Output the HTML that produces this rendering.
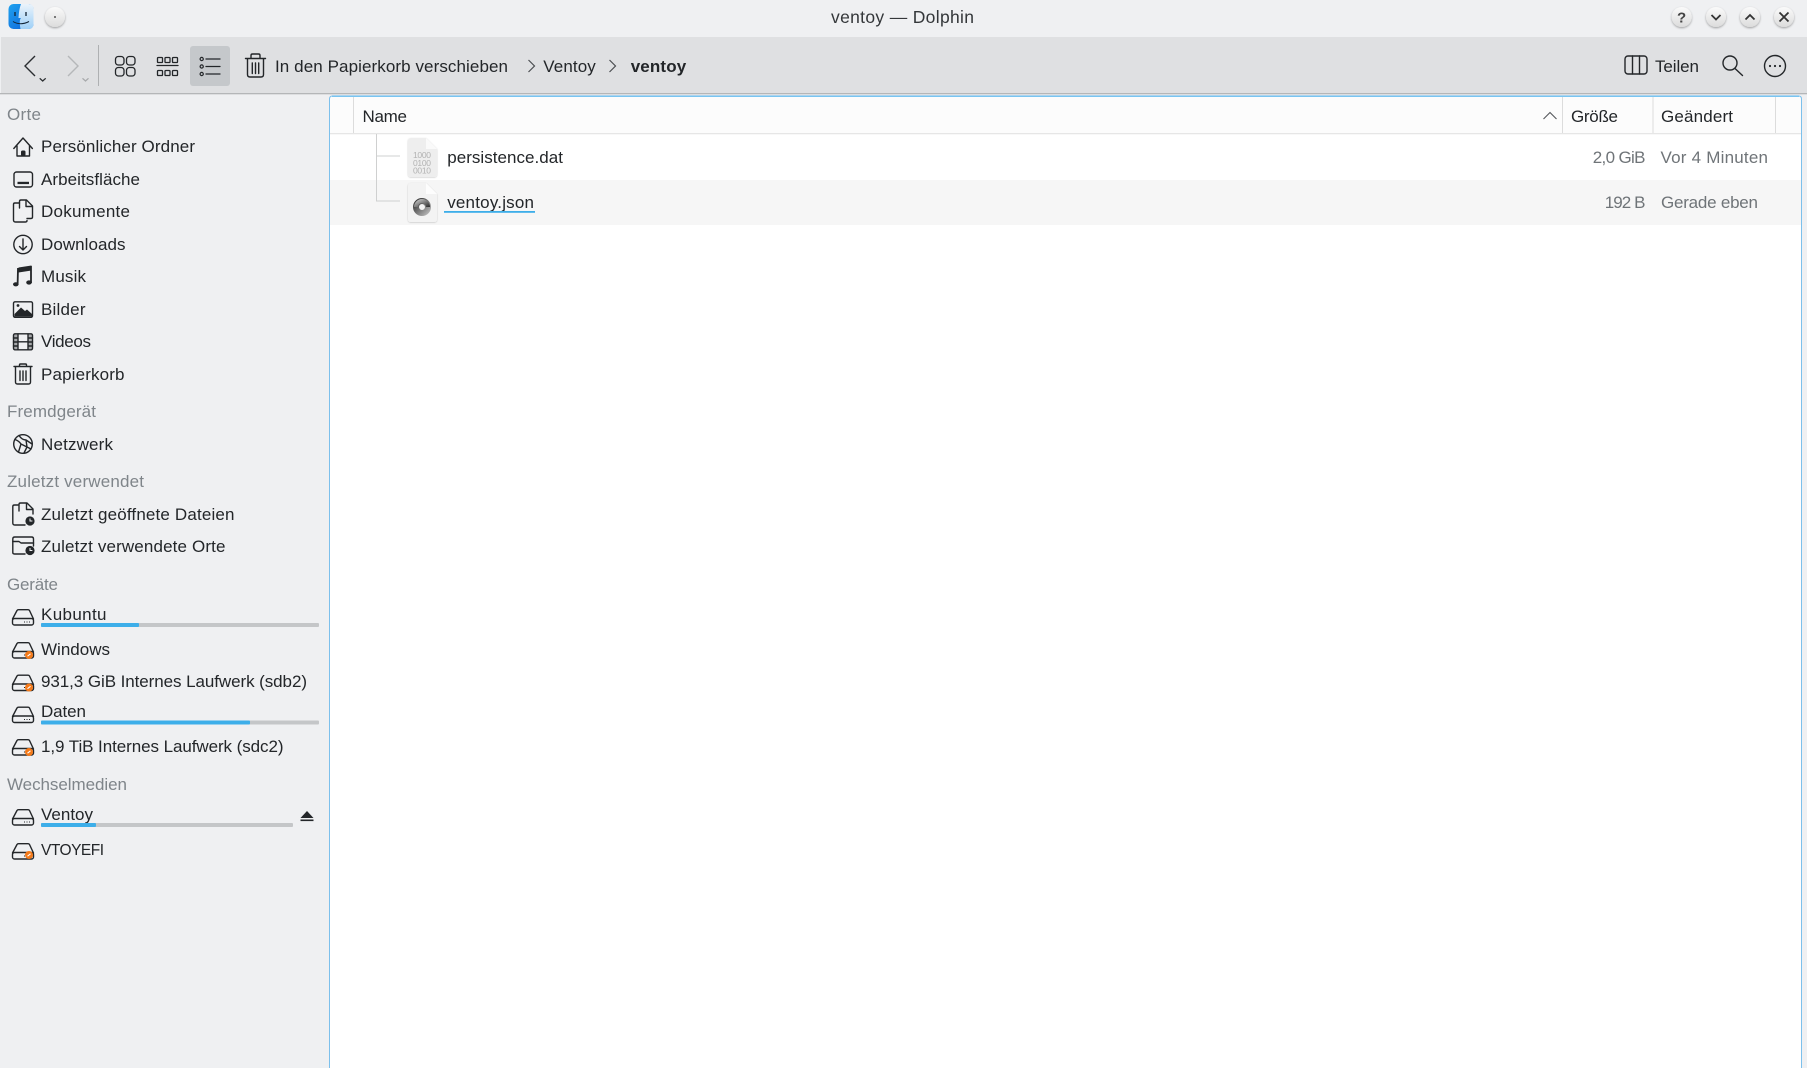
<!DOCTYPE html>
<html lang="de">
<head>
<meta charset="utf-8">
<title>ventoy — Dolphin</title>
<style>
html,body{margin:0;padding:0;background:#eff0f2;width:1807px;height:1068px;overflow:hidden}
svg{display:block}
text{font-family:"Liberation Sans",sans-serif;font-size:17px;fill:#232629}
.h{fill:#7f858a}
.d{fill:#6f7478}
.i{fill:none;stroke:#232629;stroke-width:1.4;stroke-linecap:round;stroke-linejoin:round}
.f{fill:#232629;stroke:none}
</style>
</head>
<body>
<svg width="1807" height="1068" viewBox="0 0 1807 1068" xmlns="http://www.w3.org/2000/svg">
<defs>
<linearGradient id="fb" x1="0" y1="0" x2="1" y2="1"><stop offset="0" stop-color="#1fa2ef"/><stop offset="1" stop-color="#0d5fd8"/></linearGradient>
<linearGradient id="fl" x1="0" y1="0" x2="0" y2="1"><stop offset="0" stop-color="#eaf3fb"/><stop offset="1" stop-color="#9ed0f7"/></linearGradient>
<linearGradient id="btn" x1="0" y1="0" x2="0" y2="1"><stop offset="0" stop-color="#fafafa"/><stop offset="1" stop-color="#dcdcdc"/></linearGradient>
<linearGradient id="ring" x1="0" y1="0" x2="1" y2="1"><stop offset="0" stop-color="#3a3a3a"/><stop offset="1" stop-color="#b0b0b0"/></linearGradient>
<linearGradient id="ring2" x1="1" y1="1" x2="0" y2="0"><stop offset="0" stop-color="#333"/><stop offset="1" stop-color="#bbb"/></linearGradient>
<filter id="sh" x="-30%" y="-30%" width="160%" height="170%"><feDropShadow dx="0" dy="1" stdDeviation="1" flood-color="#000" flood-opacity=".35"/></filter>
<filter id="sh2" x="-20%" y="-20%" width="140%" height="140%"><feDropShadow dx="0" dy="0.5" stdDeviation="0.7" flood-color="#000" flood-opacity=".22"/></filter>
<g id="drive">
<path class="i" d="M12.5 10 L17 1.5 Q17.5 .7 18.6 .7 H28 Q29 .7 29.5 1.5 L33.5 10"/>
<rect class="i" x="12.5" y="9.5" width="21" height="6.5" rx="2"/>
<path d="M24 13h6" stroke="#232629" stroke-width="1" stroke-dasharray="1 1.5" fill="none"/>
</g>
<g id="badge"><circle cx="29" cy="0" r="4" fill="#f47a1a"/><path d="M27.5 1.2 L30.5 -1.2" stroke="#fff" stroke-width="1"/></g>
<g id="clock"><circle cx="0" cy="0" r="4.6" fill="#232629"/><path d="M0 -2.5V0H2.4" stroke="#eff0f2" stroke-width="1" fill="none"/></g>
</defs>

<!-- backgrounds -->
<rect width="1807" height="1068" fill="#eff0f2"/>
<rect x="1" y="37" width="1806" height="56" fill="#dfe0e2"/>
<rect x="0" y="93" width="1807" height="1.3" fill="#b4b6b8"/>

<!-- title bar -->
<rect x="8.5" y="4" width="25" height="25" rx="5" fill="url(#fb)"/>
<path d="M21 4 H28.5 Q33.5 4 33.5 9 V24 Q33.5 29 28.5 29 H20.5 Q18.8 20 21 18 H18.5 Q19 9 21 4Z" fill="url(#fl)"/>
<path d="M15 12v4M26 12v4" stroke="#123" stroke-width="1.3"/>
<path d="M13 21.5 Q20.5 26 29 21.5" stroke="#123" stroke-width="1" fill="none"/>
<circle cx="55" cy="17" r="10" fill="url(#btn)" filter="url(#sh)"/>
<circle cx="55" cy="17" r="1" fill="#555"/>
<text x="831" y="23" textLength="143" lengthAdjust="spacing" style="font-size:17.5px;fill:#34373a">ventoy — Dolphin</text>
<g filter="url(#sh)">
<circle cx="1681.7" cy="17" r="10" fill="url(#btn)"/>
<circle cx="1716" cy="17" r="10" fill="url(#btn)"/>
<circle cx="1750" cy="17" r="10" fill="url(#btn)"/>
<circle cx="1784" cy="17" r="10" fill="url(#btn)"/>
</g>
<text x="1677" y="22.5" style="font-size:15px;font-weight:bold;fill:#444">?</text>
<path d="M1711.5 15 L1716 19.5 L1720.5 15" stroke="#333" stroke-width="1.8" fill="none"/>
<path d="M1745.5 19.5 L1750 15 L1754.5 19.5" stroke="#333" stroke-width="1.8" fill="none"/>
<path d="M1779.5 12.5 L1788.5 21.5 M1788.5 12.5 L1779.5 21.5" stroke="#333" stroke-width="1.8" fill="none"/>

<!-- toolbar -->
<path d="M35 56 L25 66 L35 76" fill="none" stroke="#2a2d30" stroke-width="1.4"/>
<path d="M39.7 78.3 L42.7 81 L45.7 78.3" fill="none" stroke="#2a2d30" stroke-width="1.3"/>
<path d="M68 56 L78 66 L68 76" fill="none" stroke="#b5b7b9" stroke-width="1.4"/>
<path d="M82.5 78.3 L85.5 81 L88.5 78.3" fill="none" stroke="#a8aaac" stroke-width="1.3"/>
<rect x="98" y="45" width="1" height="41" fill="#aeb0b2"/>
<g class="i" style="stroke-width:1.3">
<rect x="115.5" y="56.5" width="8.5" height="8.5" rx="2.8"/><rect x="126.5" y="56.5" width="8.5" height="8.5" rx="2.8"/>
<rect x="115.5" y="67.5" width="8.5" height="8.5" rx="2.8"/><rect x="126.5" y="67.5" width="8.5" height="8.5" rx="2.8"/>
<rect x="157.5" y="57.5" width="5" height="5" rx=".8"/><rect x="165" y="57.5" width="5" height="5" rx=".8"/><rect x="172.5" y="57.5" width="5" height="5" rx=".8"/>
<rect x="157.5" y="70.5" width="5" height="5" rx=".8"/><rect x="165" y="70.5" width="5" height="5" rx=".8"/><rect x="172.5" y="70.5" width="5" height="5" rx=".8"/>
<path d="M157 65.5H178"/>
</g>
<rect x="190" y="46" width="40" height="40" rx="3" fill="#c5c8cb"/>
<g class="i" style="stroke-width:1.2">
<circle cx="201.7" cy="59" r="1.6"/><circle cx="201.7" cy="66.5" r="1.6"/><circle cx="201.7" cy="74" r="1.6"/>
<path d="M206 59H220M206 66.5H220M206 74H220" style="stroke-width:1.3"/>
</g>
<g class="i">
<path d="M245.5 58.5H265.5"/><path d="M251 58 V55.5 Q251 54 252.5 54 H258.5 Q260 54 260 55.5 V58"/>
<path d="M247.5 59 V74.5 Q247.5 77 250 77 H261 Q263.5 77 263.5 74.5 V59"/>
<path d="M252.3 63V73.5M255.5 63V73.5M258.7 63V73.5"/>
</g>
<text x="275" y="72" textLength="233" lengthAdjust="spacing">In den Papierkorb verschieben</text>
<path d="M528.5 60 L534.5 66 L528.5 72" fill="none" stroke="#4a4d50" stroke-width="1.2"/>
<text x="543.3" y="72" textLength="52.5" lengthAdjust="spacing">Ventoy</text>
<path d="M609.5 60 L615.5 66 L609.5 72" fill="none" stroke="#4a4d50" stroke-width="1.2"/>
<text x="630.7" y="72" textLength="55.5" lengthAdjust="spacing" style="font-weight:bold">ventoy</text>
<g class="i"><rect x="1625" y="56" width="22" height="18" rx="3"/><path d="M1632.5 56V74M1639.5 56V74"/></g>
<text x="1655" y="72" textLength="44" lengthAdjust="spacing">Teilen</text>
<g class="i"><circle cx="1730" cy="63" r="7"/><path d="M1735 68.5L1742.5 75.5"/></g>
<g class="i"><circle cx="1775" cy="66" r="10.5"/></g>
<circle cx="1770" cy="66" r="1.1" fill="#232629"/><circle cx="1775" cy="66" r="1.1" fill="#232629"/><circle cx="1780" cy="66" r="1.1" fill="#232629"/>

<!-- main panel -->
<path d="M329.5 1068 V99 Q329.5 96 332.5 96 H1798.5 Q1801.5 96 1801.5 99 V1068 Z" fill="#fff"/>
<path d="M330 97 H1801 V133 H330 Z" fill="#fcfcfc"/>
<rect x="330" y="133" width="1471" height="1.3" fill="#e6e6e6"/>
<rect x="330" y="180" width="1471" height="45" fill="#f6f6f6"/>
<path d="M329.5 1068 V99 Q329.5 96 332.5 96 H1798.5 Q1801.5 96 1801.5 99 V1068" fill="none" stroke="#7cc0ec" stroke-width="1"/>
<path d="M332 96.3 H1799" stroke="#4db0ec" stroke-width="1"/>
<rect x="353" y="97" width="1" height="36" fill="#dcdcdc"/>
<rect x="1562" y="97" width="1" height="36" fill="#dcdcdc"/>
<rect x="1652.5" y="97" width="1" height="36" fill="#dcdcdc"/>
<rect x="1775" y="97" width="1" height="36" fill="#dcdcdc"/>
<text x="362.5" y="122" textLength="44.5" lengthAdjust="spacing">Name</text>
<path d="M1543.5 119 L1550 112.5 L1556.5 119" fill="none" stroke="#55585b" stroke-width="1.1"/>
<text x="1571" y="122" textLength="47" lengthAdjust="spacing">Größe</text>
<text x="1661" y="122" textLength="72" lengthAdjust="spacing">Geändert</text>

<path d="M376.5 134V201M376 156H400M376 201H400" fill="none" stroke="#cfd0d0" stroke-width="1"/>

<g filter="url(#sh2)">
<path d="M408 141 Q408 138 411 138 H426 L437 149 V174 Q437 177 434 177 H411 Q408 177 408 174Z" fill="#eeeeee"/>
<path d="M426 138 V149 H437Z" fill="#fafafa"/>
</g>
<text x="413" y="158" textLength="18" lengthAdjust="spacing" style="font-size:8.5px;fill:#b2b2b2">1000</text>
<text x="413" y="166" textLength="18" lengthAdjust="spacing" style="font-size:8.5px;fill:#b2b2b2">0100</text>
<text x="413" y="173.5" textLength="18" lengthAdjust="spacing" style="font-size:8.5px;fill:#b2b2b2">0010</text>
<g filter="url(#sh2)">
<path d="M408 186 Q408 183 411 183 H426 L437 194 V219 Q437 222 434 222 H411 Q408 222 408 219Z" fill="#f3f3f3"/>
<path d="M426 183 V194 H437Z" fill="#fdfdfd"/>
</g>
<circle cx="422" cy="207" r="6" fill="none" stroke="url(#ring)" stroke-width="6"/>
<path d="M416 207 A6 6 0 0 1 428 207" fill="none" stroke="url(#ring2)" stroke-width="4"/>

<text x="447.2" y="163" textLength="115.8" lengthAdjust="spacing">persistence.dat</text>
<text x="447.2" y="208" textLength="86.8" lengthAdjust="spacing">ventoy.json</text>
<rect x="444" y="211" width="91" height="1.8" fill="#3daee9"/>
<text x="1592.7" y="163" textLength="52.8" lengthAdjust="spacing" class="d">2,0 GiB</text>
<text x="1660.5" y="163" textLength="107.5" lengthAdjust="spacing" class="d">Vor 4 Minuten</text>
<text x="1604.7" y="208" textLength="40.8" lengthAdjust="spacing" class="d">192 B</text>
<text x="1661" y="208" textLength="97" lengthAdjust="spacing" class="d">Gerade eben</text>

<!-- sidebar text -->
<text x="7" y="120" textLength="34" lengthAdjust="spacing" class="h">Orte</text>
<text x="41" y="152" textLength="154" lengthAdjust="spacing">Persönlicher Ordner</text>
<text x="41" y="185" textLength="99" lengthAdjust="spacing">Arbeitsfläche</text>
<text x="41" y="217" textLength="89" lengthAdjust="spacing">Dokumente</text>
<text x="41" y="250" textLength="84.5" lengthAdjust="spacing">Downloads</text>
<text x="41" y="282" textLength="45" lengthAdjust="spacing">Musik</text>
<text x="41" y="315" textLength="44.5" lengthAdjust="spacing">Bilder</text>
<text x="41" y="347" textLength="50" lengthAdjust="spacing">Videos</text>
<text x="41" y="380" textLength="83.5" lengthAdjust="spacing">Papierkorb</text>
<text x="7" y="417" textLength="89" lengthAdjust="spacing" class="h">Fremdgerät</text>
<text x="41" y="450" textLength="72" lengthAdjust="spacing">Netzwerk</text>
<text x="7" y="487" textLength="137" lengthAdjust="spacing" class="h">Zuletzt verwendet</text>
<text x="41" y="520" textLength="193.5" lengthAdjust="spacing">Zuletzt geöffnete Dateien</text>
<text x="41" y="552" textLength="184.5" lengthAdjust="spacing">Zuletzt verwendete Orte</text>
<text x="7" y="590" textLength="51" lengthAdjust="spacing" class="h">Geräte</text>
<text x="41" y="620" textLength="65.5" lengthAdjust="spacing">Kubuntu</text>
<text x="41" y="655" textLength="69" lengthAdjust="spacing">Windows</text>
<text x="41" y="687" textLength="266" lengthAdjust="spacing">931,3 GiB Internes Laufwerk (sdb2)</text>
<text x="41" y="717" textLength="45" lengthAdjust="spacing">Daten</text>
<text x="41" y="752" textLength="242.5" lengthAdjust="spacing">1,9 TiB Internes Laufwerk (sdc2)</text>
<text x="7" y="790" textLength="120" lengthAdjust="spacing" class="h">Wechselmedien</text>
<text x="41" y="820" textLength="52" lengthAdjust="spacing">Ventoy</text>
<text x="41" y="855" textLength="63" lengthAdjust="spacing" style="font-size:15.5px">VTOYEFI</text>

<!-- capacity bars -->
<rect x="41" y="623" width="278" height="4" rx="1" fill="#c4c6c8"/><rect x="41" y="623" width="98" height="4" rx="1" fill="#3daee9"/>
<rect x="41" y="720.5" width="278" height="4" rx="1" fill="#c4c6c8"/><rect x="41" y="720.5" width="209" height="4" rx="1" fill="#3daee9"/>
<rect x="41" y="823" width="252" height="4" rx="1" fill="#c4c6c8"/><rect x="41" y="823" width="55" height="4" rx="1" fill="#3daee9"/>
<path d="M300.5 818 L307 811 L313.5 818Z" fill="#232629"/><rect x="300.5" y="819.5" width="13" height="1.6" fill="#232629"/>

<!-- sidebar icons -->
<g class="i">
<path d="M13.8 148.5 L23 138 L32.4 148.5"/><path d="M17 146 V156 H29.5 V146"/>
<rect x="14" y="172" width="18.5" height="15" rx="2.5"/>
<path d="M19.5 203 H14.8 Q13.5 203 13.5 204.5 V220 Q13.5 222 15.5 222 H25.5 Q27 222 27 220.5"/>
<path d="M19.5 208 V201.5 Q19.5 200 21 200 H26.5 L32.5 206 V217 Q32.5 218.5 31 218.5 H27"/>
<path d="M26 200.5 V206.5 H32"/>
<circle cx="23" cy="244.5" r="9.2"/><path d="M23 239V249.5M19.5 246.5L23 250L26.5 246.5"/>
<rect x="13.5" y="301.8" width="19" height="15.5" rx="1.5"/>
<rect x="13.5" y="333.8" width="19" height="16" rx="1.5"/>
<path d="M18 334V349.5M28 334V349.5M18 341.8H28M13.5 338H18M13.5 342H18M13.5 346H18M28 338H32.5M28 342H32.5M28 346H32.5"/>
<path d="M14 366.5H32"/><path d="M19.5 366 V365 Q19.5 364 20.5 364 H25.5 Q26.5 364 26.5 365 V366"/>
<path d="M15.5 367 V382 Q15.5 384 17.5 384 H28.5 Q30.5 384 30.5 382 V367"/>
<path d="M20 371V380.5M23 371V380.500M26 371V380.5"/>
<circle cx="23" cy="444" r="9.3"/>
<path d="M15 439.5 Q19 441 21 444 L18.500 452M19 435.500 Q22 440 26 440 L32 444M21 444 L27 447 L31 449M26 440 L27 447 L24 453"/>
<path d="M18 505 H14.5 Q12.800 505 12.800 506.500 V523 Q12.800 525 14.800 525 H25"/>
<path d="M19 511 V504.500 Q19 503 20.500 503 H27 L33 509 V514"/>
<path d="M26.500 503.500 V509.500 H32.500"/>
<path d="M25 554 H14.500 Q12.800 554 12.800 552.500 V539 Q12.800 537 14.800 537 H31.500 Q33.500 537 33.500 539 V546"/>
<path d="M12.800 541.500 H19 L21 543 H33.500"/>
</g>
<rect x="17.500" y="181.800" width="11.500" height="2.300" fill="#232629"/>
<rect x="21" y="150.500" width="4.500" height="5.500" rx="1.500" fill="#232629"/>
<path d="M18.500 267.500 L31.500 265.500 V270.500 L18.500 272.500Z" fill="#232629"/>
<path d="M18 268 L17.600 285 M31 266 V283" fill="none" stroke="#232629" stroke-width="1.800"/>
<ellipse cx="15.800" cy="284.300" rx="2.800" ry="2.100" fill="#232629"/>
<ellipse cx="29" cy="282.500" rx="2.800" ry="2.100" fill="#232629"/>
<path d="M14.500 316.500 V314 L21 307.500 L25 311 L27 309.500 L32 314 V316.500Z" fill="#232629"/>
<circle cx="18" cy="305.500" r="1.400" fill="#232629"/>
<path d="M14 334.500H18V349H14ZM28 334.500H32V349H28Z" fill="#232629" opacity=".35"/>
<use href="#clock" x="30" y="521"/>
<use href="#clock" x="30" y="550.500"/>

<use href="#drive" x="0" y="609"/>
<use href="#drive" x="0" y="642"/><use href="#badge" x="0" y="655"/>
<use href="#drive" x="0" y="674.500"/><use href="#badge" x="0" y="687.500"/>
<use href="#drive" x="0" y="706.500"/>
<use href="#drive" x="0" y="739"/><use href="#badge" x="0" y="752"/>
<use href="#drive" x="0" y="809"/>
<use href="#drive" x="0" y="843"/><use href="#badge" x="0" y="855"/>
</svg>
</body>
</html>
